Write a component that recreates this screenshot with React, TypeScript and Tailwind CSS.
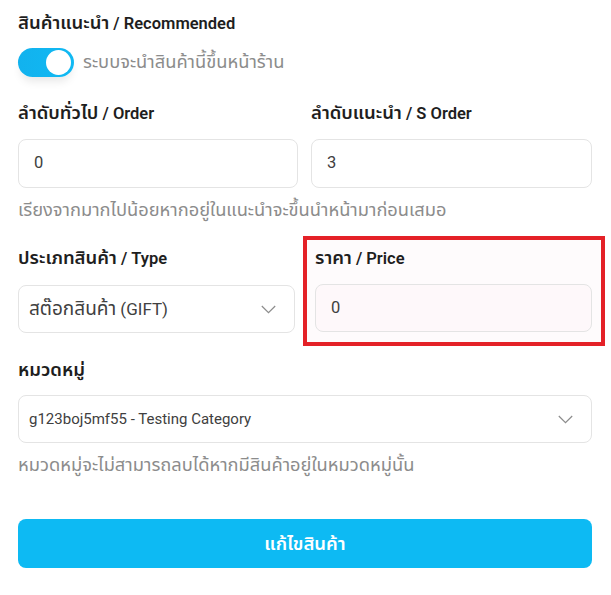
const font = { fontFamily: 'Roboto, "Noto Sans Thai", "Noto Sans", sans-serif' };
const thaiFont = { fontFamily: '"Noto Sans Thai", sans-serif' };

// Thai runs get their own size class, since the reference's Thai glyphs run larger than its Latin ones
function Mixed({ text, thai }: { text: string; thai: string }) {
  const parts = text.split(/([\u0E00-\u0E7F]+)/);
  return (
    <>
      {parts.map((p, i) =>
        /[\u0E00-\u0E7F]/.test(p) ? (
          <span key={i} className={thai} style={thaiFont}>
            {p}
          </span>
        ) : (
          <span key={i}>{p}</span>
        ),
      )}
    </>
  );
}

function Label({ text, className = "" }: { text: string; className?: string }) {
  return (
    <div className={`h-6 whitespace-nowrap text-[16.5px] font-semibold leading-6 text-[#1e1e1e] ${className}`}>
      <Mixed text={text} thai="text-[18.5px]" />
    </div>
  );
}

function Hint({ text, className = "" }: { text: string; className?: string }) {
  return (
    <div className={`h-6 whitespace-nowrap text-[16px] leading-6 text-[#8c8c8c] ${className}`}>
      <Mixed text={text} thai="text-[18.3px]" />
    </div>
  );
}

function Chevron() {
  return (
    <svg width="15" height="9" viewBox="0 0 15 9" fill="none">
      <path d="M0.8 1 7.5 7.7 14.2 1" stroke="#8c8c8c" strokeWidth="1.2" />
    </svg>
  );
}

function TextBox({ value, className = "" }: { value: string; className?: string }) {
  return (
    <div
      className={`flex items-center rounded-lg border border-[#e4e4e4] pl-[15px] text-[16.5px] text-[#404040] ${className}`}
    >
      {value}
    </div>
  );
}

function SelectBox({ value, className = "", latin = "" }: { value: string; className?: string; latin?: string }) {
  return (
    <div
      className={`flex h-[48px] items-center justify-between rounded-lg border border-[#e4e4e4] bg-white pl-[10px] pr-[18px] leading-6 text-[#404040] ${className}`}
    >
      <span className={`whitespace-nowrap ${latin}`}>
        <Mixed text={value} thai="text-[19px]" />
      </span>
      <Chevron />
    </div>
  );
}

export default function App() {
  return (
    <div className="h-[595px] w-[611px] overflow-hidden bg-white pl-[18px] pt-[11px]" style={font}>
      <Label text="สินค้าแนะนำ / Recommended" />

      <div className="mt-[13px] flex items-center gap-[9px]">
        <div className="relative h-[29px] w-[56px] rounded-full bg-gradient-to-r from-[#12b2ee] to-[#10b9f3] shadow-[0_7px_10px_-3px_rgba(0,0,0,0.10)]">
          <div className="absolute right-[3px] top-[2px] h-[25px] w-[25px] rounded-full bg-white" />
        </div>
        <Hint text="ระบบจะนำสินค้านี้ขึ้นหน้าร้าน" />
      </div>

      <div className="mt-[24px] grid w-[574px] grid-cols-[280px_281px] gap-x-[13px]">
        <div>
          <Label text="ลำดับทั่วไป / Order" />
          <TextBox value="0" className="mt-[14px] h-[49px]" />
        </div>
        <div>
          <Label text="ลำดับแนะนำ / S Order" />
          <TextBox value="3" className="mt-[14px] h-[49px]" />
        </div>
      </div>
      <Hint className="mt-[11px]" text="เรียงจากมากไปน้อยหากอยู่ในแนะนำจะขึ้นนำหน้ามาก่อนเสมอ" />

      <div className="mt-[13px] flex">
        <div className="w-[277px] pt-[10px]">
          <Label text="ประเภทสินค้า / Type" />
          <SelectBox value="สต๊อกสินค้า (GIFT)" latin="text-[17px]" className="mt-[15px]" />
        </div>
        <div className="ml-[8px] h-[110px] w-[302px] border-4 border-[#e42127] bg-[#fefbfc] pl-[8px] pr-[9px] pt-[6px]">
          <Label text="ราคา / Price" />
          <TextBox value="0" className="mt-[14px] h-[48px] bg-[#fef8fa]" />
        </div>
      </div>

      <div className="mt-[12px] w-[574px]">
        <Label text="หมวดหมู่" />
        <SelectBox value="g123boj5mf55 - Testing Category" latin="text-[15px]" className="mt-[13px]" />
        <Hint className="mt-[11px]" text="หมวดหมู่จะไม่สามารถลบได้หากมีสินค้าอยู่ในหมวดหมู่นั้น" />
      </div>

      <button className="mt-[41px] flex h-[49px] w-[574px] items-center justify-center rounded-lg bg-[#0dbaf3] text-white">
        <Label text="แก้ไขสินค้า" className="text-white" />
      </button>
    </div>
  );
}
